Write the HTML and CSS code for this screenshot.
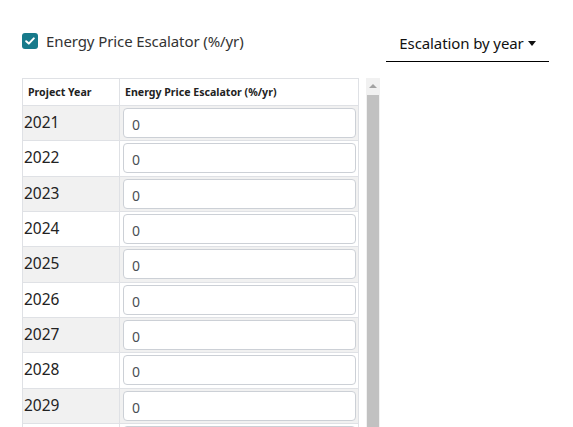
FILE: index.html
```html
<!DOCTYPE html>
<html>
<head>
<meta charset="utf-8">
<link rel="stylesheet" href="styles.css">
</head>
<body>
<div class="top">
  <label class="check">
    <span class="box"><svg width="10" height="8" viewBox="0 0 10 8"><path d="M1.2 4.2 L3.8 6.6 L8.8 1.4" fill="none" stroke="#fff" stroke-width="2" stroke-linecap="round" stroke-linejoin="round"/></svg></span>
    <span class="check-label">Energy Price Escalator (%/yr)</span>
  </label>
  <div class="dropdown">
    <span>Escalation by year</span><span class="caret"></span>
  </div>
</div>
<div class="grid-wrap">
  <div class="grid-view">
    <table class="grid">
      <thead>
        <tr><th class="c1">Project Year</th><th class="c2">Energy Price Escalator (%/yr)</th></tr>
      </thead>
      <tbody>
        <tr class="odd"><td class="year">2021</td><td><div class="inp">0</div></td></tr>
        <tr><td class="year">2022</td><td><div class="inp">0</div></td></tr>
        <tr class="odd"><td class="year">2023</td><td><div class="inp">0</div></td></tr>
        <tr><td class="year">2024</td><td><div class="inp">0</div></td></tr>
        <tr class="odd"><td class="year">2025</td><td><div class="inp">0</div></td></tr>
        <tr><td class="year">2026</td><td><div class="inp">0</div></td></tr>
        <tr class="odd"><td class="year">2027</td><td><div class="inp">0</div></td></tr>
        <tr><td class="year">2028</td><td><div class="inp">0</div></td></tr>
        <tr class="odd"><td class="year">2029</td><td><div class="inp">0</div></td></tr>
        <tr><td class="year"></td><td><div class="inp"></div></td></tr>
      </tbody>
    </table>
  </div>
  <div class="scrollbar">
    <div class="arrow"></div>
    <div class="thumb"></div>
  </div>
</div>
</body>
</html>
```
FILE: styles.css
```css
html, body {
  margin: 0;
  padding: 0;
  background: #fff;
  overflow: hidden;
  height: 427px;
}
body {
  font-family: "Noto Sans", "Open Sans", sans-serif;
  color: #212529;
}
.top {
  display: flex;
  justify-content: space-between;
  align-items: flex-start;
  padding: 31px 24px 0 22px;
  height: 78px;
  box-sizing: border-box;
}
.check {
  display: flex;
  align-items: center;
  gap: 8px;
}
.box {
  width: 16px;
  height: 16px;
  border-radius: 3px;
  background: #177a8b;
  display: flex;
  align-items: center;
  justify-content: center;
}
.check-label {
  font-size: 15px;
  letter-spacing: -0.1px;
  line-height: 20px;
  color: #333;
}
.dropdown {
  margin-top: 2px;
  width: 163px;
  height: 29px;
  box-sizing: border-box;
  border-bottom: 1px solid #000;
  display: flex;
  align-items: flex-start;
  justify-content: center;
  gap: 4px;
  font-size: 15px;
  line-height: 20px;
  color: #111;
  letter-spacing: -0.1px;
}
.caret {
  width: 0;
  height: 0;
  border-left: 4px solid transparent;
  border-right: 4px solid transparent;
  border-top: 5px solid #111;
  margin-top: 8px;
}
.grid-wrap {
  display: flex;
  align-items: stretch;
  padding-left: 22px;
  gap: 7px;
  height: 349px;
  overflow: hidden;
}
.grid-view {
  overflow: hidden;
}
.grid {
  border-collapse: collapse;
  width: 337px;
  table-layout: fixed;
}
.grid th, .grid td {
  border: 1px solid #dfe1e5;
  padding: 0;
}
.grid th {
  height: 26px;
  font-size: 10.6px;
  font-weight: 700;
  text-align: left;
  padding-left: 5px;
  color: #222;
}
.grid th.c1 { width: 91px; }
.grid td {
  height: 35.33px;
  box-sizing: border-box;
}
.grid tr.odd td { background: #f1f1f1; }
.grid td.year {
  font-size: 15.5px;
  vertical-align: top;
  padding: 6px 0 0 1px;
  line-height: 20px;
  color: #222;
}
.grid td:last-child {
  padding: 2px 2px 2px 3px;
}
.inp {
  height: 30px;
  box-sizing: border-box;
  border: 1px solid #ccd0d6;
  border-radius: 4px;
  background: #fff;
  font-size: 14px;
  line-height: 28px;
  padding-left: 8px;
  padding-top: 2px;
  color: #4a4f55;
}
.scrollbar {
  width: 14px;
  background: #f1f1f1;
  display: flex;
  flex-direction: column;
  align-items: center;
  flex-shrink: 0;
}
.arrow {
  margin-top: 6px;
  width: 0;
  height: 0;
  border-left: 4px solid transparent;
  border-right: 4px solid transparent;
  border-bottom: 4px solid #a3a3a3;
}
.thumb {
  margin-top: 7px;
  width: 12px;
  flex: 1;
  background: #c1c1c1;
}
```
